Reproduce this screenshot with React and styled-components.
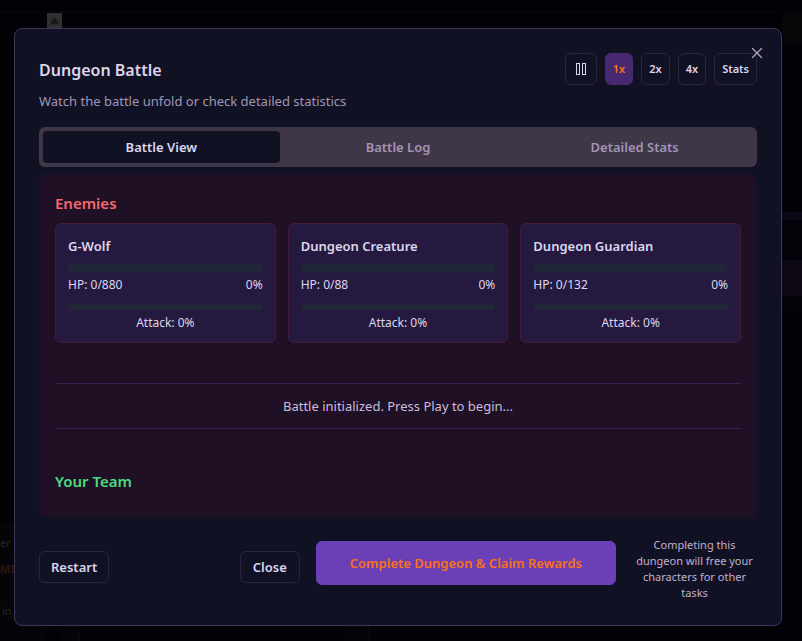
import React from "react";
import styled, { createGlobalStyle } from "styled-components";

const GlobalStyle = createGlobalStyle`
  *, *::before, *::after { box-sizing: border-box; }
  body {
    margin: 0;
    background: #020105;
    color: #ddd6ee;
    font-family: "Noto Sans", "Open Sans", sans-serif;
    font-size: 13px;
    line-height: 20px;
  }
  h2, h3, h4, p { margin: 0; }
  button { font: inherit; cursor: pointer; }
`;

const Screen = styled.div`
  display: grid;
  grid-template: minmax(100vh, auto) / minmax(0, 1fr);
`;

const Backdrop = styled.div`
  grid-area: 1 / 1;
  display: grid;
  grid-template: 12px 1fr 118px / 46px 16px 1fr 20px;
  overflow: hidden;
`;

const TopStrip = styled.div`
  grid-column: 1 / -1;
  border-bottom: 1px solid #08070b;
`;

const ScrollTrack = styled.div`
  grid-area: 2 / 2;
  padding-top: 1px;
  svg { display: block; }
`;

const SideStripes = styled.div`
  grid-area: 2 / 4;
  padding-top: 1px;
`;

const Stripe = styled.div`
  height: ${(p) => p.$h}px;
  background: ${(p) => p.$tone};
`;

const Promo = styled.div`
  grid-area: 3 / 1 / 4 / 2;
  display: flex;
  flex-direction: column;
  padding-top: 10px;
  background: #050509;
  color: #26262b;
  font-size: 11px;
  white-space: nowrap;
`;

const PromoBrand = styled.strong`
  margin: 6px 0 22px;
  color: #2b1905;
`;

const PromoAction = styled.span`
  padding-left: 2px;
`;

const LowerPanels = styled.div`
  grid-area: 3 / 3 / 4 / 5;
  display: grid;
  grid-template-columns: 18px 264px 26px 1fr;
`;

const LowerPanel = styled.div`
  background: #050509;
  border-right: 1px solid #0a0a0e;
`;

const Overlay = styled.div`
  grid-area: 1 / 1;
  display: flex;
  justify-content: center;
  align-items: flex-start;
  padding: 28px 20px 15px 14px;
`;

const Dialog = styled.section`
  position: relative;
  width: 100%;
  max-width: 768px;
  padding: 24px;
  background: #101223;
  border: 1px solid #44335f;
  border-radius: 8px;
`;

const Header = styled.header`
  margin-bottom: 16px;
`;

const TitleRow = styled.div`
  display: flex;
  align-items: center;
  justify-content: space-between;
  margin-bottom: 6px;
`;

const Title = styled.h2`
  padding-top: 2px;
  font-size: 16px;
  font-weight: 600;
  line-height: 24px;
`;

const Description = styled.p`
  color: #a294b8;
`;

const Controls = styled.div`
  display: flex;
  gap: 8px;
`;

const Button = styled.button`
  display: inline-flex;
  align-items: center;
  justify-content: center;
  min-width: ${(p) => p.$minWidth || 0}px;
  height: 32px;
  padding: 0 11px;
  background: transparent;
  border: 1px solid #2d233e;
  border-radius: 6px;
  color: #ddd6ee;
  font-weight: 600;
  white-space: nowrap;
`;

const SpeedButton = styled(Button)`
  padding: 0 7px;
  font-size: 11px;
  ${(p) => p.$active && "background: #472972; border-color: #472972; color: #f97316;"}
`;

const PauseButton = styled(Button)`
  padding: 0;
  width: 32px;
`;

const CloseIcon = styled.button`
  position: absolute;
  top: 16px;
  right: 16px;
  display: grid;
  padding: 0;
  background: none;
  border: 0;
  color: #a9a4b6;
`;

const TabList = styled.div`
  display: grid;
  grid-template-columns: repeat(3, 1fr);
  padding: 4px;
  margin-bottom: 8px;
  background: #3f3647;
  border-radius: 6px;
`;

const Tab = styled.button`
  height: 32px;
  padding: 0 12px;
  border: 0;
  border-radius: 4px;
  background: ${(p) => (p.$active ? "#101223" : "transparent")};
  color: ${(p) => (p.$active ? "#ddd6ee" : "#a294b8")};
  font-weight: 600;
`;

const Arena = styled.div`
  padding: 16px;
  margin-bottom: 16px;
  background: #1f1025;
  border-radius: 6px;
`;

const TeamHeading = styled.h3`
  margin-bottom: 8px;
  color: ${(p) => p.$tone};
  font-size: 15px;
  font-weight: 600;
  line-height: 24px;
`;

const EnemyGrid = styled.div`
  display: grid;
  grid-template-columns: repeat(3, minmax(0, 1fr));
  gap: 12px;
`;

const EnemyCard = styled.article`
  padding: 12px 12px 11px;
  background: #261940;
  border: 1px solid #431b3b;
  border-radius: 6px;
`;

const EnemyName = styled.h4`
  margin-bottom: 8px;
  font-size: 13px;
  font-weight: 600;
`;

const Meter = styled.div`
  height: ${(p) => p.$h}px;
  margin-bottom: 5px;
  overflow: hidden;
  background: #202838;
  border-radius: 4px;
`;

const MeterFill = styled.div`
  height: 100%;
  background: #22c55e;
`;

const HpRow = styled.div`
  display: flex;
  justify-content: space-between;
  margin-bottom: 11px;
  font-size: 12px;
  line-height: 16px;
`;

const AttackLabel = styled.div`
  font-size: 12px;
  line-height: 16px;
  text-align: center;
`;

const BattleMessage = styled.p`
  && { margin: 40px 0; }
  padding: 12px 0;
  border: solid #35204f;
  border-width: 1px 0;
  color: #cbbfdd;
  text-align: center;
`;

const Footer = styled.footer`
  display: flex;
  align-items: center;
  justify-content: space-between;
  gap: 16px;
`;

const FooterActions = styled.div`
  display: flex;
  align-items: center;
  gap: 16px;
`;

const ClaimButton = styled(Button)`
  height: 44px;
  padding: 0 33px;
  margin-bottom: 8px;
  background: #6b3fb5;
  border-color: #6b3fb5;
  color: #f97316;
`;

const Note = styled.p`
  && { margin-top: 4px; }
  width: 125px;
  color: #c0b0d2;
  font-size: 11px;
  line-height: 16px;
  text-align: center;
`;

const enemies = [
  { name: "G-Wolf", hp: 0, max: 880 },
  { name: "Dungeon Creature", hp: 0, max: 88 },
  { name: "Dungeon Guardian", hp: 0, max: 132 },
];

const speeds = ["1x", "2x", "4x"];
const tabs = ["Battle View", "Battle Log", "Detailed Stats"];

function Enemy({ name, hp, max }) {
  const percent = Math.round((hp / max) * 100);
  return (
    <EnemyCard>
      <EnemyName>{name}</EnemyName>
      <Meter $h={8}><MeterFill style={{ width: `${percent}%` }} /></Meter>
      <HpRow><span>HP: {hp}/{max}</span><span>{percent}%</span></HpRow>
      <Meter $h={6}><MeterFill style={{ width: "0%" }} /></Meter>
      <AttackLabel>Attack: 0%</AttackLabel>
    </EnemyCard>
  );
}

export default function App() {
  const [speed, setSpeed] = React.useState("1x");
  const [tab, setTab] = React.useState("Battle View");
  return (
    <>
      <GlobalStyle />
      <Screen>
        <Backdrop aria-hidden="true">
          <TopStrip />
          <ScrollTrack>
            <svg width="16" height="16" viewBox="0 0 16 16">
              <path d="M1 0H16V16H1Z" fill="#303030" />
              <path d="M8.5 5.5L12 10.5H5Z" fill="#191919" stroke="#191919" strokeWidth="2" strokeLinejoin="round" />
            </svg>
          </ScrollTrack>
          <SideStripes>
            <Stripe $h={33} $tone="#060508" />
            <Stripe $h={166} $tone="#030206" />
            <Stripe $h={8} $tone="#0d0814" />
            <Stripe $h={40} $tone="#030309" />
            <Stripe $h={36} $tone="#0d0814" />
            <Stripe $h={16} $tone="#030309" />
          </SideStripes>
          <Promo>
            <span>er</span>
            <PromoBrand>MIU</PromoBrand>
            <PromoAction>in</PromoAction>
          </Promo>
          <LowerPanels>
            <LowerPanel />
            <div />
            <LowerPanel />
          </LowerPanels>
        </Backdrop>
        <Overlay>
          <Dialog role="dialog" aria-labelledby="battle-title" aria-describedby="battle-description">
            <Header>
              <TitleRow>
                <Title id="battle-title">Dungeon Battle</Title>
                <Controls>
                  <PauseButton aria-label="Pause">
                    <svg width="10" height="12" viewBox="0 0 10 12" fill="none" stroke="currentColor">
                      <rect x="0.5" y="0.5" width="3" height="11" />
                      <rect x="6.5" y="0.5" width="3" height="11" />
                    </svg>
                  </PauseButton>
                  {speeds.map((s) => (
                    <SpeedButton key={s} $active={s === speed} onClick={() => setSpeed(s)}>{s}</SpeedButton>
                  ))}
                  <SpeedButton>Stats</SpeedButton>
                </Controls>
              </TitleRow>
              <Description id="battle-description">Watch the battle unfold or check detailed statistics</Description>
            </Header>
            <TabList role="tablist">
              {tabs.map((t) => (
                <Tab key={t} role="tab" aria-selected={t === tab} $active={t === tab} onClick={() => setTab(t)}>{t}</Tab>
              ))}
            </TabList>
            <Arena>
              <TeamHeading $tone="#f46a6e">Enemies</TeamHeading>
              <EnemyGrid>
                {enemies.map((e) => <Enemy key={e.name} {...e} />)}
              </EnemyGrid>
              <BattleMessage>Battle initialized. Press Play to begin...</BattleMessage>
              <TeamHeading $tone="#4ade80">Your Team</TeamHeading>
            </Arena>
            <Footer>
              <Button>Restart</Button>
              <FooterActions>
                <Button $minWidth={60}>Close</Button>
                <ClaimButton>Complete Dungeon &amp; Claim Rewards</ClaimButton>
                <Note>Completing this dungeon will free your characters for other tasks</Note>
              </FooterActions>
            </Footer>
            <CloseIcon aria-label="Close dialog">
              <svg width="16" height="16" viewBox="0 0 16 16" fill="none" stroke="currentColor" strokeWidth="1.4" strokeLinecap="round">
                <path d="M3.5 3.5L12.5 12.5M12.5 3.5L3.5 12.5" />
              </svg>
            </CloseIcon>
          </Dialog>
        </Overlay>
      </Screen>
    </>
  );
}
